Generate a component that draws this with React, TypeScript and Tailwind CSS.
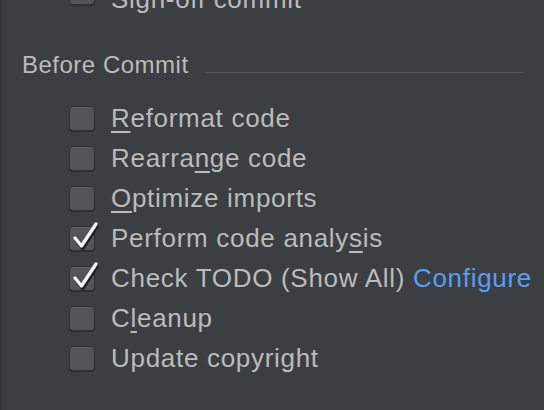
import type { ReactNode } from "react";

type Item = {
  label: ReactNode;
  checked: boolean;
};

const font = { fontFamily: '"Liberation Sans", Arial, sans-serif' };

function M({ children }: { children: ReactNode }) {
  return <span className="underline decoration-[1.5px] underline-offset-[4px]">{children}</span>;
}

const items: Item[] = [
  { label: <><M>R</M>eformat code</>, checked: false },
  { label: <>Rearra<M>n</M>ge code</>, checked: false },
  { label: <><M>O</M>ptimize imports</>, checked: false },
  { label: <>Perform code analy<M>s</M>is</>, checked: true },
  {
    label: (
      <>
        Check TODO (Show All) <span className="text-[#589df6]">Configure</span>
      </>
    ),
    checked: true,
  },
  { label: <>C<M>l</M>eanup</>, checked: false },
  { label: <>Update copyright</>, checked: false },
];

function Checkbox({ checked }: { checked: boolean }) {
  return (
    <div className="relative h-[25px] w-[26px] shrink-0 rounded-[4px] border border-[#2f3133] bg-[#535658] shadow-[0_1px_0_#2b2d2e,inset_0_1px_0_#5e6163]">
      {checked ? (
        <svg className="absolute left-[1px] top-[-6px]" width="30" height="32" viewBox="0 0 30 32" fill="none">
          <path d="M4.5 18 L11 26 L25 4" stroke="#1e1f20" strokeWidth="3.8" strokeLinecap="round" strokeLinejoin="round" transform="translate(0.8 1.2)" />
          <path d="M4 17 L10.5 25 L25 3" stroke="#f2f2f2" strokeWidth="3.4" strokeLinecap="round" strokeLinejoin="round" />
        </svg>
      ) : null}
    </div>
  );
}

export default function App() {
  return (
    <div
      className="h-[410px] w-[544px] overflow-hidden border-l-2 border-[#323436] bg-[#3c3f41] text-[#bbbbbb]"
      style={font}
    >
      <div className="-mt-[28px] flex h-10 items-center gap-4 pl-[67px] text-[26px] tracking-[0.7px]">
        <Checkbox checked={false} />
        <span className="mt-[14px]">Sign-off commit</span>
      </div>

      <div className="mt-[39px] flex h-7 items-end gap-4 pl-[20px]">
        <span className="text-[24px] leading-7 tracking-[0.5px]">Before Commit</span>
        <div className="mb-[6px] mr-[20px] h-px flex-1 bg-[#545658]" />
      </div>

      <div className="mt-[19px] flex flex-col">
        {items.map((item, i) => (
          <div key={i} className="flex h-10 items-center gap-4 pl-[67px] text-[26px] leading-10 tracking-[0.7px] whitespace-nowrap">
            <Checkbox checked={item.checked} />
            <span>{item.label}</span>
          </div>
        ))}
      </div>
    </div>
  );
}
